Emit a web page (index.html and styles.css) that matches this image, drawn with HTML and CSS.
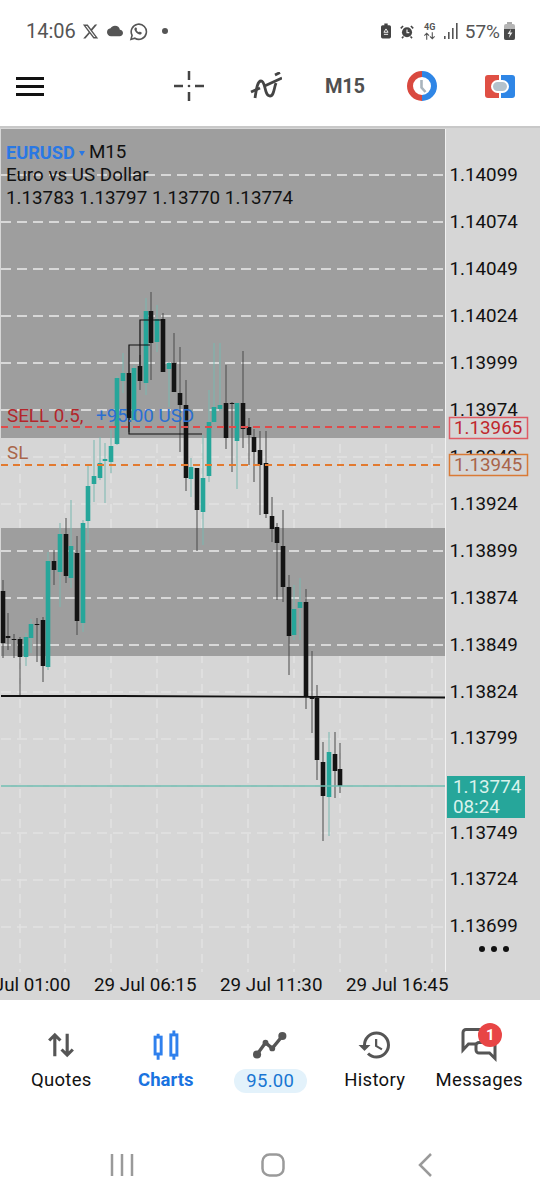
FILE: index.html
```html
<!DOCTYPE html>
<html lang="en">
<head>
    <meta charset="UTF-8">
    <meta name="viewport" content="width=device-width, initial-scale=1.0">
    <title>Charts</title>
    <link rel="stylesheet" href="styles.css">
</head>
<body>
    <div class="status-bar">
        <div class="status-left">
            <span class="clock">14:06</span>
            <svg class="st-x" viewBox="0 0 24 24"><path d="M18.244 2.25h3.308l-7.227 8.26 8.502 11.24H16.17l-5.214-6.817L4.99 21.75H1.68l7.73-8.835L1.254 2.25H8.08l4.713 6.231zm-1.161 17.52h1.833L7.084 4.126H5.117z"/></svg>
            <svg class="st-cloud" viewBox="0 0 24 24"><path d="M19.35 10.04A7.49 7.49 0 0 0 12 4C9.11 4 6.6 5.64 5.35 8.04A5.994 5.994 0 0 0 0 14c0 3.31 2.69 6 6 6h13c2.76 0 5-2.24 5-5 0-2.64-2.05-4.78-4.65-4.96z"/></svg>
            <svg class="st-wa" viewBox="0 0 24 24"><path class="wa-ring" d="M2.5 22l1.4-5.2A9.6 9.6 0 1 1 7.400 20.500z"/><path d="M9 6.800c.5 0 .8 1 1.100 1.800.2.500 0 .900-.6 1.500.7 1.400 1.800 2.400 3.200 3 .5-.6.900-1.100 1.300-.9l1.900 1c.4.200.2 1.300-.3 1.800-.8.800-2 .900-3.300.4-2.500-1-4.400-2.900-5.300-5.300-.4-1.300-.1-2.600.9-3.300z"/></svg>
            <span class="st-dot"></span>
        </div>
        <div class="status-right">
            <svg class="st-batt" viewBox="0 0 12 18"><path d="M4 0h4v2h2a2 2 0 0 1 2 2v12a2 2 0 0 1-2 2H2a2 2 0 0 1-2-2V4a2 2 0 0 1 2-2h2z"/><path class="batt-mark" d="M6 6.500l2.500 4H3.500zM3.500 13h5"/></svg>
            <svg class="st-alarm" viewBox="0 0 18 18"><circle cx="9" cy="10" r="6.500"/><path class="alarm-hand" d="M9 6.500V10.500H12"/><path class="alarm-ear" d="M1 5l3-3M17 5l-3-3M4.500 15.500l-2 2M13.500 15.500l2 2"/></svg>
            <div class="st-net">
                <span class="net-label">4G</span>
                <svg class="net-arrows" viewBox="0 0 14 8"><path d="M4 8V1M1.500 3.500L4 1l2.500 2.500M10 0v7M7.500 4.500L10 7l2.500-2.500"/></svg>
            </div>
            <svg class="st-signal" viewBox="0 0 14 16"><rect x="0" y="13" width="1.600" height="3"/><rect x="4" y="9" width="1.600" height="7"/><rect x="8" y="5" width="1.600" height="11"/><rect x="12" y="0" width="1.600" height="16"/></svg>
            <span class="st-pct">57%</span>
            <svg class="st-charge" viewBox="0 0 11 18"><rect x="3" y="0" width="5" height="2" fill="#aaa"/><rect x="0" y="2" width="11" height="16" rx="2" fill="#b5b5b5"/><path d="M0 7h11v9a2 2 0 0 1-2 2H2a2 2 0 0 1-2-2z" fill="#4a4a4a"/><path d="M7 7l-3.500 5h2.300l-1 4 3.700-5.500H6.200z" fill="#eee"/></svg>
        </div>
    </div>

    <div class="toolbar">
        <div class="menu-btn"><span></span><span></span><span></span></div>
        <svg class="tool-cross" viewBox="0 0 30 30"><path d="M15 0v9M15 21v9M0 15h9M21 15h9"/><circle cx="15" cy="15" r="1.300"/></svg>
        <svg class="tool-wave" viewBox="0 0 32 28"><path d="M5 26C6 20 7 9 11 9c5 0 3 15 9 15 4 0 4-8 6-13"/><path d="M1 20L10 16M14 14.200L32 6M25 3l5-2.500"/></svg>
        <span class="tool-period">M15</span>
        <svg class="tool-clock" viewBox="0 0 30 30"><path d="M15 3A12 12 0 0 0 15 27" stroke="#d9493f" fill="none" stroke-width="6"/><path d="M15 3A12 12 0 0 1 15 27" stroke="#2f86e6" fill="none" stroke-width="6"/><path d="M14.500 9v7.500l4 4.500" stroke="#a9b4bd" fill="none" stroke-width="2.600"/></svg>
        <svg class="tool-trade" viewBox="0 0 30 23"><path d="M14 0H3a3 3 0 0 0-3 3v17a3 3 0 0 0 3 3h11z" fill="#df4f44"/><path d="M16 0h11a3 3 0 0 1 3 3v17a3 3 0 0 1-3 3H16z" fill="#2f86e6"/><rect x="7" y="6" width="16" height="11" rx="5.500" fill="#b4c2cc" stroke="#fff" stroke-width="2"/></svg>
    </div>

    <div class="chart">
        <svg id="chartSvg" class="chart-svg" viewBox="0 128 540 872"></svg>
        <div class="legend">
            <div class="legend-head"><span class="legend-sym">EURUSD</span><span class="legend-arrow"></span><span>M15</span></div>
            <div>Euro vs US Dollar</div>
            <div>1.13783 1.13797 1.13770 1.13774</div>
        </div>
        <div class="more-dots"><span></span><span></span><span></span></div>
    </div>

    <div class="tabs">
        <div class="tab">
            <svg class="tab-icon icon-grey" viewBox="0 0 32 32"><path d="M10.500 26V7M5.500 12L10.500 7l5 5M21.500 6v19M16.500 20l5 5 5-5" fill="none" stroke-width="2.800"/></svg>
            <span class="tab-label">Quotes</span>
        </div>
        <div class="tab tab-active">
            <svg class="tab-icon icon-blue" viewBox="0 0 32 32"><path d="M9 6v23M23 3v26" fill="none" stroke-width="2.600"/><rect x="6.300" y="9" width="5.400" height="15" fill="#fff" stroke-width="2.600"/><rect x="20.300" y="7" width="5.400" height="18" fill="#fff" stroke-width="2.600"/></svg>
            <span class="tab-label">Charts</span>
        </div>
        <div class="tab">
            <svg class="tab-icon icon-grey" viewBox="0 0 32 32"><path d="M4 25L12 14 18 19 27 8" fill="none" stroke-width="3"/><circle cx="4.500" cy="24.500" r="3.600"/><circle cx="12" cy="14" r="2.600"/><circle cx="18" cy="19" r="2.600"/><circle cx="27" cy="8" r="3.600"/></svg>
            <span class="tab-pill">95.00</span>
        </div>
        <div class="tab">
            <svg class="tab-icon icon-hist" viewBox="0 0 24 24"><path d="M13 3a9 9 0 0 0-9 9H1l3.890 3.890.070.140L9 12H6c0-3.870 3.130-7 7-7s7 3.130 7 7-3.130 7-7 7c-1.930 0-3.680-.79-4.940-2.060l-1.420 1.420A8.954 8.954 0 0 0 13 21a9 9 0 0 0 0-18zm-1 5v5l4.280 2.540.72-1.210-3.500-2.080V8H12z"/></svg>
            <span class="tab-label">History</span>
        </div>
        <div class="tab">
            <div class="msg-wrap">
                <svg class="tab-icon icon-grey" viewBox="0 0 36 36"><path d="M24 2.500H5a3 3 0 0 0-3 3V23l5.500-6H15" fill="none" stroke-width="3"/><path d="M24 15.500H18a3 3 0 0 0-3 3V23a3 3 0 0 0 3 3H28.500L34 31.500V17" fill="none" stroke-width="3"/></svg>
                <span class="msg-badge">1</span>
            </div>
            <span class="tab-label">Messages</span>
        </div>
    </div>

    <div class="nav-bar">
        <svg class="nav-recent" viewBox="0 0 24 24"><path d="M2 1v22M12 1v22M22 1v22"/></svg>
        <svg class="nav-home" viewBox="0 0 24 24"><rect x="1.500" y="1.500" width="21" height="21" rx="7"/></svg>
        <svg class="nav-back" viewBox="0 0 14 24"><path d="M13 1L2 12l11 11"/></svg>
    </div>

    <script src="chart.js"></script>
</body>
</html>
```

FILE: styles.css
```css
* {
    box-sizing: border-box;
}

body {
    margin: 0;
    width: 540px;
    height: 1200px;
    overflow: hidden;
    background: #fff;
    font-family: 'Roboto', 'Liberation Sans', sans-serif;
    color: #111;
}

svg {
    display: block;
    flex: none;
}

/* status bar */
.status-bar {
    height: 62px;
    display: flex;
    justify-content: space-between;
    align-items: center;
    padding: 0 25px 0 26px;
    color: #555;
}

.status-left, .status-right {
    display: flex;
    align-items: center;
}

.clock {
    font-size: 20px;
    width: 56px;
}

.st-x {
    width: 17px;
    height: 17px;
    fill: #555;
}

.st-cloud {
    width: 16px;
    height: 16px;
    fill: #555;
    margin-left: 8px;
}

.st-wa {
    width: 19px;
    height: 19px;
    fill: #555;
    margin-left: 6px;
}

.wa-ring {
    fill: none;
    stroke: #555;
    stroke-width: 2;
}

.st-dot {
    width: 6px;
    height: 6px;
    border-radius: 50%;
    background: #555;
    margin-left: 14px;
}

.st-batt {
    width: 10px;
    height: 16px;
    fill: #444;
}

.batt-mark {
    fill: none;
    stroke: #eee;
    stroke-width: 1.2;
}

.st-alarm {
    width: 14px;
    height: 15px;
    margin-left: 9px;
    fill: #444;
}

.alarm-hand {
    fill: none;
    stroke: #eee;
    stroke-width: 1.5;
}

.alarm-ear {
    fill: none;
    stroke: #444;
    stroke-width: 2;
}

.st-net {
    width: 14px;
    margin-left: 9px;
    display: flex;
    flex-direction: column;
    align-items: center;
}

.net-label {
    font-size: 9px;
    font-weight: 700;
    line-height: 9px;
    color: #555;
}

.net-arrows {
    width: 13px;
    height: 8px;
    fill: none;
    stroke: #555;
    stroke-width: 1.2;
}

.st-signal {
    width: 14px;
    height: 16px;
    margin-left: 7px;
    fill: #555;
}

.st-pct {
    font-size: 19px;
    margin-left: 7px;
}

.st-charge {
    width: 11px;
    height: 18px;
    margin-left: 4px;
}

/* toolbar */
.toolbar {
    height: 66px;
    display: flex;
    align-items: center;
    padding: 0 24px 16px 16px;
    border-bottom: 2px solid #c8c8c8;
}

.menu-btn {
    width: 28px;
    display: flex;
    flex-direction: column;
    gap: 5px;
}

.menu-btn span {
    height: 3px;
    background: #111;
}

.tool-cross {
    width: 30px;
    height: 30px;
    margin-left: 130px;
    fill: #444;
    stroke: #444;
    stroke-width: 2.5;
}

.tool-cross circle {
    stroke: none;
}

.tool-wave {
    width: 32px;
    height: 28px;
    margin-left: 46px;
    fill: none;
    stroke: #444;
    stroke-width: 2.8;
}

.tool-period {
    width: 39px;
    margin-left: 43px;
    font-size: 20px;
    font-weight: 700;
    letter-spacing: -0.2px;
    color: #4f4f4f;
    white-space: nowrap;
}

.tool-clock {
    width: 30px;
    height: 30px;
    margin-left: 43px;
}

.tool-trade {
    width: 30px;
    height: 23px;
    margin-left: 48px;
}

/* chart */
.chart {
    position: relative;
    height: 872px;
    background: #d6d6d6;
    overflow: hidden;
}

.chart-svg {
    width: 540px;
    height: 872px;
}

.chart-svg text {
    font-family: 'Roboto', 'Liberation Sans', sans-serif;
    font-size: 18.8px;
    fill: #111;
    dominant-baseline: central;
}

.chart-svg .order-sell {
    fill: #b3262b;
}

.chart-svg .order-profit {
    fill: #2a6fd2;
}

.chart-svg .order-sl {
    fill: #a9654a;
}

.chart-svg .tag-red {
    fill: #c0272d;
}

.chart-svg .tag-orange {
    fill: #a9654a;
}

.chart-svg .tag-teal {
    fill: #d9f2ec;
}

.legend {
    position: absolute;
    left: 6px;
    top: 13px;
    font-size: 18.8px;
    line-height: 23px;
    white-space: nowrap;
}

.legend-head {
    display: flex;
    align-items: center;
}

.legend-sym {
    color: #2a78e4;
    font-size: 18.2px;
    font-weight: 700;
}

.legend-arrow {
    width: 0;
    height: 0;
    margin: 2px 4px 0 4px;
    border-left: 3.5px solid transparent;
    border-right: 3.5px solid transparent;
    border-top: 5px solid #2a78e4;
}

.more-dots {
    position: absolute;
    left: 479px;
    top: 818px;
    display: flex;
    gap: 6px;
}

.more-dots span {
    width: 6px;
    height: 6px;
    border-radius: 50%;
    background: #111;
}

/* bottom tabs */
.tabs {
    height: 130px;
    display: grid;
    grid-template-columns: repeat(5, 104.5px);
    padding: 27px 0 0 9px;
    background: #fff;
}

.tab {
    display: flex;
    flex-direction: column;
    align-items: center;
    gap: 6px;
}

.tab-icon {
    width: 36px;
    height: 36px;
}

.icon-grey {
    fill: #555;
    stroke: #555;
}

.icon-grey circle {
    stroke: none;
}

.icon-blue {
    fill: none;
    stroke: #2f80ed;
}

.icon-hist {
    fill: #555;
}

.tab-label {
    font-size: 18.5px;
    line-height: 22px;
    letter-spacing: 0.3px;
    color: #111;
    white-space: nowrap;
}

.tab-active .tab-label {
    color: #1a73e0;
    font-weight: 700;
    letter-spacing: 0;
}

.tab-pill {
    width: 73px;
    height: 24px;
    border-radius: 12px;
    background: #e3f2fb;
    color: #1976d2;
    font-size: 18.5px;
    line-height: 24px;
    letter-spacing: 0.3px;
    text-align: center;
}

.msg-wrap {
    position: relative;
    width: 36px;
    height: 36px;
}

.msg-badge {
    position: absolute;
    left: 17px;
    top: -4px;
    width: 24px;
    height: 24px;
    border-radius: 50%;
    background: #e84545;
    color: #fff;
    font-size: 15px;
    font-weight: 700;
    line-height: 24px;
    text-align: center;
}

/* android nav */
.nav-bar {
    height: 70px;
    display: flex;
    align-items: center;
    padding: 0 0 0 110px;
    background: #fff;
}

.nav-recent {
    width: 24px;
    height: 24px;
    fill: none;
    stroke: #9a9a9a;
    stroke-width: 2.5;
}

.nav-home {
    width: 24px;
    height: 24px;
    margin-left: 127px;
    fill: none;
    stroke: #9a9a9a;
    stroke-width: 2.5;
}

.nav-back {
    width: 14px;
    height: 24px;
    margin-left: 133px;
    fill: none;
    stroke: #9a9a9a;
    stroke-width: 2.5;
}
```

FILE: chart.js
```js
const TEAL = "#26a69a", BLACK = "#141414";
const T = 1, B = 0;

// x, color, wick top, wick bottom, body top, body bottom
const candles = [
    [3, B, 580, 658, 591, 643], [8, B, 613, 650, 636, 638], [14, B, 634, 658, 639, 640],
    [20, B, 637, 696, 639, 657], [26, T, 633, 666, 637, 657], [31, T, 619, 653, 624, 638],
    [37, B, 618, 662, 624, 625], [43, B, 617, 682, 620, 666], [48, T, 552, 670, 561, 667],
    [54, B, 550, 585, 561, 570], [60, T, 523, 607, 534, 572], [66, B, 518, 583, 534, 576],
    [71, T, 500, 588, 546, 578], [77, B, 536, 635, 553, 621], [83, T, 520, 632, 523, 623],
    [88, T, 466, 543, 486, 521], [94, T, 440, 502, 476, 484], [100, T, 437, 480, 463, 478],
    [105, T, 443, 503, 459, 461], [111, T, 430, 473, 446, 462], [117, T, 376, 445, 378, 444],
    [123, T, 353, 393, 373, 381], [129, B, 373, 432, 373, 418], [134, T, 365, 422, 368, 420],
    [140, B, 355, 390, 366, 381], [146, T, 298, 395, 311, 383], [151, B, 292, 380, 311, 343],
    [157, T, 305, 352, 319, 342], [163, B, 313, 372, 319, 372], [169, T, 362, 407, 363, 369],
    [174, B, 333, 392, 363, 392], [180, B, 347, 452, 393, 405], [186, B, 380, 491, 405, 478],
    [191, T, 458, 497, 467, 479], [197, B, 468, 551, 468, 510], [203, T, 435, 545, 478, 512],
    [209, T, 390, 482, 422, 476], [214, T, 343, 423, 407, 422], [220, T, 343, 411, 405, 409],
    [226, B, 365, 449, 403, 438], [232, B, 402, 472, 403, 404], [237, T, 403, 489, 403, 441],
    [243, B, 351, 448, 403, 429], [249, B, 418, 465, 427, 435], [254, B, 429, 482, 437, 452],
    [260, B, 431, 515, 450, 465], [266, B, 431, 518, 463, 514], [272, B, 497, 542, 516, 529],
    [277, B, 523, 600, 527, 543], [283, B, 510, 602, 546, 587], [289, B, 575, 675, 587, 636],
    [294, T, 585, 640, 609, 635], [300, T, 578, 640, 602, 608], [306, B, 589, 709, 602, 697],
    [312, B, 651, 733, 697, 699], [317, B, 685, 780, 698, 760], [323, B, 742, 841, 762, 796],
    [329, T, 732, 836, 752, 797], [335, B, 732, 798, 754, 771], [340, B, 743, 793, 769, 786]
];

const hLines = [175, 222, 269, 316, 363, 410, 457, 504, 551, 598, 645, 692, 739, 786, 833, 880, 927];
const vLines = [20, 65, 111, 157, 202, 248, 294, 340, 386, 432];
const prices = [
    ["1.14099", 175], ["1.14074", 222], ["1.14049", 269], ["1.14024", 316], ["1.13999", 363],
    ["1.13974", 410], ["1.13949", 457], ["1.13924", 504], ["1.13899", 551], ["1.13874", 598],
    ["1.13849", 645], ["1.13824", 692], ["1.13799", 738], ["1.13749", 833], ["1.13724", 879],
    ["1.13699", 926]
];
const times = [["29 Jul 01:00", -32], ["29 Jul 06:15", 94], ["29 Jul 11:30", 220], ["29 Jul 16:45", 346]];

function inDarkZone(y) {
    return y < 438 || (y > 528 && y < 656);
}

function drawChart() {
    let s = "";

    vLines.forEach(x => {
        s += `<line x1="${x}" y1="129" x2="${x}" y2="972" stroke="#e8e8e8" stroke-width="1" stroke-dasharray="9 6"/>`;
    });

    s += `<rect x="1" y="129" width="444" height="309" fill="#9e9e9e"/>`;
    s += `<rect x="1" y="528" width="444" height="128" fill="#9e9e9e"/>`;

    hLines.forEach(y => {
        let color = inDarkZone(y) ? "#ececec" : "#e2e2e2";
        s += `<line x1="1" y1="${y}" x2="445" y2="${y}" stroke="${color}" stroke-width="1.300" stroke-dasharray="10 6"/>`;
    });

    candles.forEach(c => {
        let teal = c[1] === T;
        s += `<rect x="${c[0] - 0.5}" y="${c[2]}" width="1" height="${c[3] - c[2]}" fill="${teal ? "#78b8b0" : "#4a4a4a"}"/>`;
        s += `<rect x="${c[0] - 2.3}" y="${c[4]}" width="4.600" height="${c[5] - c[4]}" fill="${teal ? TEAL : BLACK}"/>`;
    });

    // hand-drawn objects on the chart
    s += `<path d="M129 373V345H150M140 366V320H163M129 418V434H202" fill="none" stroke="#111" stroke-width="1.200"/>`;
    s += `<path d="M1 696H120L445 697.500" fill="none" stroke="#111" stroke-width="1.800"/>`;

    // order lines
    s += `<line x1="1" y1="427" x2="445" y2="427" stroke="#e04a4a" stroke-width="2" stroke-dasharray="7 5"/>`;
    s += `<line x1="1" y1="465" x2="445" y2="465" stroke="#e27a30" stroke-width="2" stroke-dasharray="7 5"/>`;
    s += `<line x1="1" y1="786" x2="445" y2="786" stroke="#6fbcb0" stroke-width="1.500"/>`;
    s += `<text x="7" y="416" class="order-sell">SELL 0.5,</text>`;
    s += `<text x="96" y="416" class="order-profit">+95.00 USD</text>`;
    s += `<text x="7" y="453" class="order-sl">SL</text>`;

    // price scale
    s += `<line x1="445.500" y1="129" x2="445.500" y2="972" stroke="#f2f2f2" stroke-width="1"/>`;
    prices.forEach(p => {
        s += `<text x="449.500" y="${p[1]}">${p[0]}</text>`;
    });
    s += `<rect x="449.500" y="417.500" width="78" height="21" fill="#d6d6d6" stroke="#df5a64" stroke-width="1.500"/>`;
    s += `<text x="454" y="428" class="tag-red">1.13965</text>`;
    s += `<rect x="449.500" y="454.500" width="78" height="21" fill="#d6d6d6" stroke="#d97a35" stroke-width="1.500"/>`;
    s += `<text x="454" y="465" class="tag-orange">1.13945</text>`;
    s += `<rect x="447" y="776" width="78" height="42" fill="${TEAL}"/>`;
    s += `<text x="453" y="787" class="tag-teal">1.13774</text>`;
    s += `<text x="453" y="807" class="tag-teal">08:24</text>`;

    // time scale
    times.forEach(t => {
        s += `<text x="${t[1]}" y="985">${t[0]}</text>`;
    });

    document.getElementById("chartSvg").innerHTML = s;
}

drawChart();
```
